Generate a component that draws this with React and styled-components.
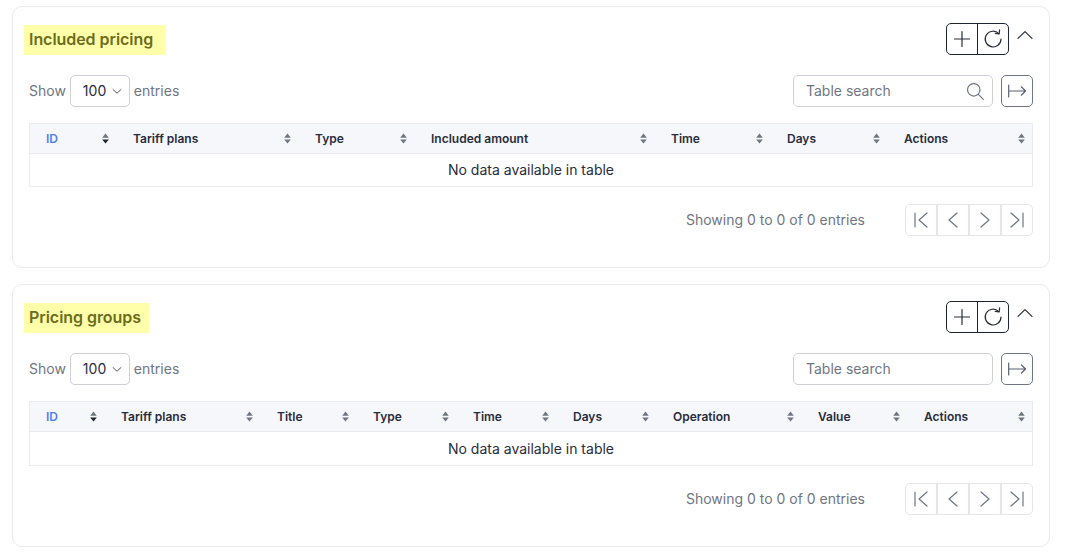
import styled, { createGlobalStyle } from 'styled-components';

const GlobalStyle = createGlobalStyle`
  html, body {
    margin: 0;
    background: #fff;
    font-family: Inter, "Liberation Sans", sans-serif;
    font-size: 14px;
    line-height: 20px;
    color: #282c3c;
  }
`;

const Page = styled.div`
  width: 1067px;
  height: 560px;
  overflow: hidden;
  padding: 6px 17px 0 12px;
  box-sizing: border-box;
  display: flex;
  flex-direction: column;
  gap: 16px;
`;

const Card = styled.section`
  border: 1px solid #e9ebef;
  border-radius: 10px;
  padding: 16px 16px 31px;
  background: #fff;
`;

const CardHeader = styled.div`
  display: flex;
  align-items: flex-start;
  justify-content: space-between;
  margin-bottom: 20px;
`;

const Title = styled.h2`
  margin: 2px 0 0 -5px;
  padding: 0 ${(p) => (p.$tight ? '8px' : '13px')} 0 5px;
  height: 30px;
  line-height: 29px;
  font-size: 16px;
  font-weight: 600;
  letter-spacing: -0.05px;
  color: #6c6c1e;
  background: #ffffa9;
`;

const HeaderTools = styled.div`
  display: flex;
  align-items: flex-start;
`;

const ButtonGroup = styled.div`
  display: flex;
  border: 1px solid #1f2433;
  border-radius: 5px;
  height: 32px;
  box-sizing: border-box;
`;

const GroupButton = styled.button`
  width: 30px;
  padding: 0;
  border: 0;
  background: none;
  display: flex;
  align-items: center;
  justify-content: center;
  color: #282c3c;
  & + & {
    width: 31px;
    border-left: 1px solid #1f2433;
  }
`;

const Collapse = styled.button`
  width: 16px;
  height: 23px;
  margin-left: 8px;
  padding: 0;
  border: 0;
  background: none;
  display: flex;
  align-items: center;
  justify-content: center;
  color: #282c3c;
`;

const Controls = styled.div`
  display: flex;
  align-items: center;
  justify-content: space-between;
  margin-bottom: 16px;
`;

const LengthLabel = styled.label`
  display: flex;
  align-items: center;
  gap: 4px;
  color: #6f7683;
`;

const LengthSelect = styled.div`
  width: 60px;
  height: 32px;
  box-sizing: border-box;
  border: 1px solid #cdd0d6;
  border-radius: 5px;
  display: flex;
  align-items: center;
  gap: 5px;
  padding-left: 12px;
  color: #282c3c;
`;

const SearchArea = styled.div`
  display: flex;
  align-items: center;
  gap: 8px;
`;

const SearchBox = styled.div`
  width: 200px;
  height: 32px;
  box-sizing: border-box;
  border: 1px solid #cdd0d6;
  border-radius: 5px;
  display: flex;
  align-items: center;
  justify-content: space-between;
  padding: 0 7px 0 12px;
  color: #6f7683;
`;

const ExportButton = styled.button`
  width: 32px;
  height: 32px;
  padding: 0;
  box-sizing: border-box;
  border: 1px solid #6f7683;
  border-radius: 5px;
  background: none;
  display: flex;
  align-items: center;
  justify-content: center;
  color: #5a6170;
`;

const Table = styled.table`
  width: 100%;
  table-layout: fixed;
  border-collapse: separate;
  border-spacing: 0;
  border: 1px solid #e9ebef;
`;

const HeadCell = styled.th`
  height: 30px;
  padding: 0 7px 0 ${(p) => (p.$first ? '16px' : '17px')};
  background: #f5f7fb;
  border-bottom: 1px solid #e9ebef;
  box-sizing: border-box;
  text-align: left;
  font-size: 12px;
  font-weight: 600;
  color: ${(p) => (p.$active ? '#4f7df3' : '#282c3c')};
`;

const HeadInner = styled.div`
  display: flex;
  align-items: center;
  justify-content: space-between;
`;

const EmptyCell = styled.td`
  height: ${(p) => (p.$tall ? '33px' : '32px')};
  padding: 0;
  text-align: center;
  font-size: 14px;
  color: #282c3c;
`;

const Footer = styled.div`
  display: flex;
  align-items: center;
  justify-content: flex-end;
  gap: 40px;
  margin-top: 17px;
  color: #6f7683;
`;

const Pager = styled.div`
  display: flex;
  height: 32px;
`;

const PageButton = styled.button`
  width: 32px;
  padding: 0;
  box-sizing: border-box;
  border: 1px solid #e3e5ea;
  background: none;
  display: flex;
  align-items: center;
  justify-content: center;
  color: #6f7683;
  &:first-child {
    border-radius: 5px 0 0 5px;
  }
  &:last-child {
    border-radius: 0 5px 5px 0;
  }
`;

const Icon = ({ size = 24, sw = 1.2, children }) => (
  <svg width={size} height={size} viewBox="0 0 24 24" fill="none" stroke="currentColor" strokeWidth={sw} strokeLinecap="round" strokeLinejoin="round">
    {children}
  </svg>
);

const SortIcon = ({ active }) => (
  <svg width="7" height="11" viewBox="0 0 8 12">
    <path d="M4 .3 7.8 5H.2z" fill="#6f7683" />
    <path d="M.2 7h7.6L4 11.7z" fill={active ? '#1f2433' : '#6f7683'} />
  </svg>
);

const DataTable = ({ columns, tall }) => (
  <Table>
    <colgroup>
      {columns.map((c) => (
        <col key={c.name} width={c.width} />
      ))}
    </colgroup>
    <thead>
      <tr>
        {columns.map((c, i) => (
          <HeadCell key={c.name} $first={i === 0} $active={i === 0}>
            <HeadInner>
              {c.name}
              <SortIcon active={i === 0} />
            </HeadInner>
          </HeadCell>
        ))}
      </tr>
    </thead>
    <tbody>
      <tr>
        <EmptyCell $tall={tall} colSpan={columns.length}>No data available in table</EmptyCell>
      </tr>
    </tbody>
  </Table>
);

const PricingCard = ({ title, second, columns }) => (
  <Card>
    <CardHeader>
      <Title $tight={second}>{title}</Title>
      <HeaderTools>
        <ButtonGroup>
          <GroupButton>
            <Icon><path d="M12 4.5v15M4.5 12h15" /></Icon>
          </GroupButton>
          <GroupButton>
            <Icon>
              <path d="M17.8 6.6A7.9 7.9 0 1 0 20 12" />
              <path d="M14.2 6.4l4 .4.4-4" />
            </Icon>
          </GroupButton>
        </ButtonGroup>
        <Collapse>
          <Icon size={16} sw={1.8}><path d="M1.5 17 12 7l10.5 10" /></Icon>
        </Collapse>
      </HeaderTools>
    </CardHeader>
    <Controls>
      <LengthLabel>
        Show
        <LengthSelect>
          100
          <Icon size={12} sw={1.6}><path d="M4 9l8 7.5L20 9" /></Icon>
        </LengthSelect>
        entries
      </LengthLabel>
      <SearchArea>
        <SearchBox>
          Table search
          {!second && (
            <Icon size={20} sw={1.5}>
              <circle cx="10.5" cy="10.5" r="7.5" />
              <path d="M16 16l6 6" />
            </Icon>
          )}
        </SearchBox>
        <ExportButton>
          <Icon>
            <path d="M3.7 6v12M3.7 12h16.8M16.5 8l4 4-4 4" />
          </Icon>
        </ExportButton>
      </SearchArea>
    </Controls>
    <DataTable columns={columns} tall={second} />
    <Footer>
      Showing 0 to 0 of 0 entries
      <Pager>
        <PageButton>
          <Icon><path d="M6 5v14M18 5l-8 7 8 7" /></Icon>
        </PageButton>
        <PageButton>
          <Icon><path d="M16 5l-8 7 8 7" /></Icon>
        </PageButton>
        <PageButton>
          <Icon><path d="M8 5l8 7-8 7" /></Icon>
        </PageButton>
        <PageButton>
          <Icon><path d="M18 5v14M6 5l8 7-8 7" /></Icon>
        </PageButton>
      </Pager>
    </Footer>
  </Card>
);

const includedColumns = [
  { name: 'ID', width: 86 },
  { name: 'Tariff plans', width: 182 },
  { name: 'Type', width: 116 },
  { name: 'Included amount', width: 240 },
  { name: 'Time', width: 116 },
  { name: 'Days', width: 117 },
  { name: 'Actions', width: 145 },
];

const groupColumns = [
  { name: 'ID', width: 74 },
  { name: 'Tariff plans', width: 156 },
  { name: 'Title', width: 96 },
  { name: 'Type', width: 100 },
  { name: 'Time', width: 100 },
  { name: 'Days', width: 100 },
  { name: 'Operation', width: 145 },
  { name: 'Value', width: 106 },
  { name: 'Actions', width: 125 },
];

export default function App() {
  return (
    <Page>
      <GlobalStyle />
      <PricingCard title="Included pricing" columns={includedColumns} />
      <PricingCard title="Pricing groups" second columns={groupColumns} />
    </Page>
  );
}
